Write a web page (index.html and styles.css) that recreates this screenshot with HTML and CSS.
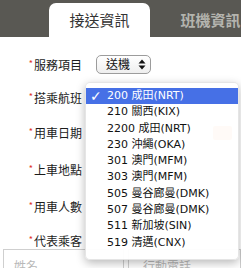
FILE: index.html
```html
<!DOCTYPE html>
<html lang="zh-Hant">
<head>
<meta charset="utf-8">
<link rel="stylesheet" href="styles.css">
</head>
<body>
<div class="page">
  <div class="topbar">
    <div class="tab tab-active">接送資訊</div>
    <div class="tab tab-inactive">班機資訊</div>
  </div>
  <div class="form">
    <div class="label"><span class="req">*</span>服務項目</div>
    <div class="field">
      <div class="select">
        <span class="select-text">送機</span>
        <svg class="select-arrows" width="8" height="11" viewBox="0 0 8 11"><path d="M4 0.5 L7.5 4.5 L0.5 4.5 Z M4 10.5 L7.5 6.5 L0.5 6.5 Z" fill="#111"/></svg>
      </div>
    </div>
    <div class="label"><span class="req">*</span>搭乘航班</div>
    <div class="field"></div>
    <div class="label"><span class="req">*</span>用車日期</div>
    <div class="field field-date"><div class="date-btn"></div></div>
    <div class="label"><span class="req">*</span>上車地點</div>
    <div class="field"></div>
    <div class="label"><span class="req">*</span>用車人數</div>
    <div class="field"></div>
    <div class="label label-last"><span class="req">*</span>代表乘客</div>
    <div class="field"></div>
  </div>
  <div class="inputs">
    <div class="input input-name">姓名</div>
    <div class="input input-phone">行動電話</div>
  </div>

  <div class="menu">
    <div class="item item-selected"><span class="check">✓</span>200 成田(NRT)</div>
    <div class="item">210 關西(KIX)</div>
    <div class="item">2200 成田(NRT)</div>
    <div class="item">230 沖繩(OKA)</div>
    <div class="item">301 澳門(MFM)</div>
    <div class="item">303 澳門(MFM)</div>
    <div class="item">505 曼谷廊曼(DMK)</div>
    <div class="item">507 曼谷廊曼(DMK)</div>
    <div class="item">511 新加坡(SIN)</div>
    <div class="item">519 清邁(CNX)</div>
  </div>
</div>
</body>
</html>
```
FILE: styles.css
```css
html, body {
  margin: 0;
  padding: 0;
  background: #fff;
}
body {
  width: 241px;
  height: 268px;
  overflow: hidden;
  font-family: "Noto Sans CJK TC", "Noto Sans", sans-serif;
  color: #222;
}
.page {
  position: relative;
  width: 241px;
  height: 268px;
  overflow: hidden;
}
.topbar {
  height: 37px;
  background: #595853;
  display: flex;
  align-items: flex-end;
  padding-left: 49px;
  box-sizing: border-box;
}
.tab {
  width: 101px;
  height: 34px;
  display: flex;
  align-items: center;
  justify-content: center;
  font-size: 15px;
  line-height: 16px;
  flex-shrink: 0;
}
.tab-active {
  background: #fff;
  border-radius: 7px 7px 0 0;
  color: #333;
}
.tab-inactive {
  margin-left: 10px;
  color: #b4b4ae;
  font-weight: bold;
}
.form {
  display: grid;
  grid-template-columns: 82px 1fr;
  grid-template-rows: 34px 33px 37px 37px 37px 24px;
  column-gap: 14px;
  padding-top: 10px;
  align-items: center;
}
.label {
  font-size: 12px;
  line-height: 14px;
  text-align: right;
  color: #1c1c1c;
  white-space: nowrap;
}
.label-last {
  align-self: end;
  padding-bottom: 1px;
}
.req {
  color: #e0302a;
  font-size: 9px;
  vertical-align: 3px;
  margin-right: 1px;
}
.field {
  height: 100%;
  display: flex;
  align-items: center;
}
.select {
  width: 55px;
  height: 19px;
  box-sizing: border-box;
  border: 1px solid #9c9c9c;
  border-radius: 5px;
  background: linear-gradient(#ffffff, #eeeeee);
  display: flex;
  align-items: center;
  padding-left: 9px;
  padding-right: 4px;
}
.select-text {
  font-size: 12px;
  line-height: 14px;
  color: #111;
}
.select-arrows {
  margin-left: auto;
}
.field-date {
  justify-content: flex-end;
}
.date-btn {
  width: 19px;
  height: 14px;
  margin-right: 9px;
  background: #f39a5f;
  border-radius: 2px;
}
.inputs {
  display: flex;
  padding-left: 3px;
}
.input {
  height: 30px;
  box-sizing: border-box;
  border: 1px solid #cfcfcf;
  font-size: 12px;
  line-height: 24px;
  padding-top: 4px;
  color: #b9b9b9;
}
.input-name {
  width: 121px;
  padding-left: 10px;
}
.input-phone {
  flex: 1;
  margin-left: 4px;
  padding-left: 14px;
}
.menu {
  position: absolute;
  left: 85px;
  top: 82px;
  width: 154px;
  height: 178px;
  box-sizing: border-box;
  padding: 5px 0 9px;
  background: rgba(255, 255, 255, 0.95);
  border: 1px solid rgba(0, 0, 0, 0.1);
  border-radius: 5px;
  box-shadow: 0 3px 10px rgba(0, 0, 0, 0.28);
  font-family: "DejaVu Sans", "Noto Sans CJK TC", sans-serif;
  font-size: 11px;
}
.item {
  height: 16.3px;
  line-height: 16.3px;
  padding-left: 21px;
  color: #111;
  white-space: nowrap;
  position: relative;
}
.item-selected {
  background: #4670e6;
  color: #fff;
}
.check {
  position: absolute;
  left: 4px;
  top: 0;
  font-size: 14px;
  font-weight: bold;
}
```
